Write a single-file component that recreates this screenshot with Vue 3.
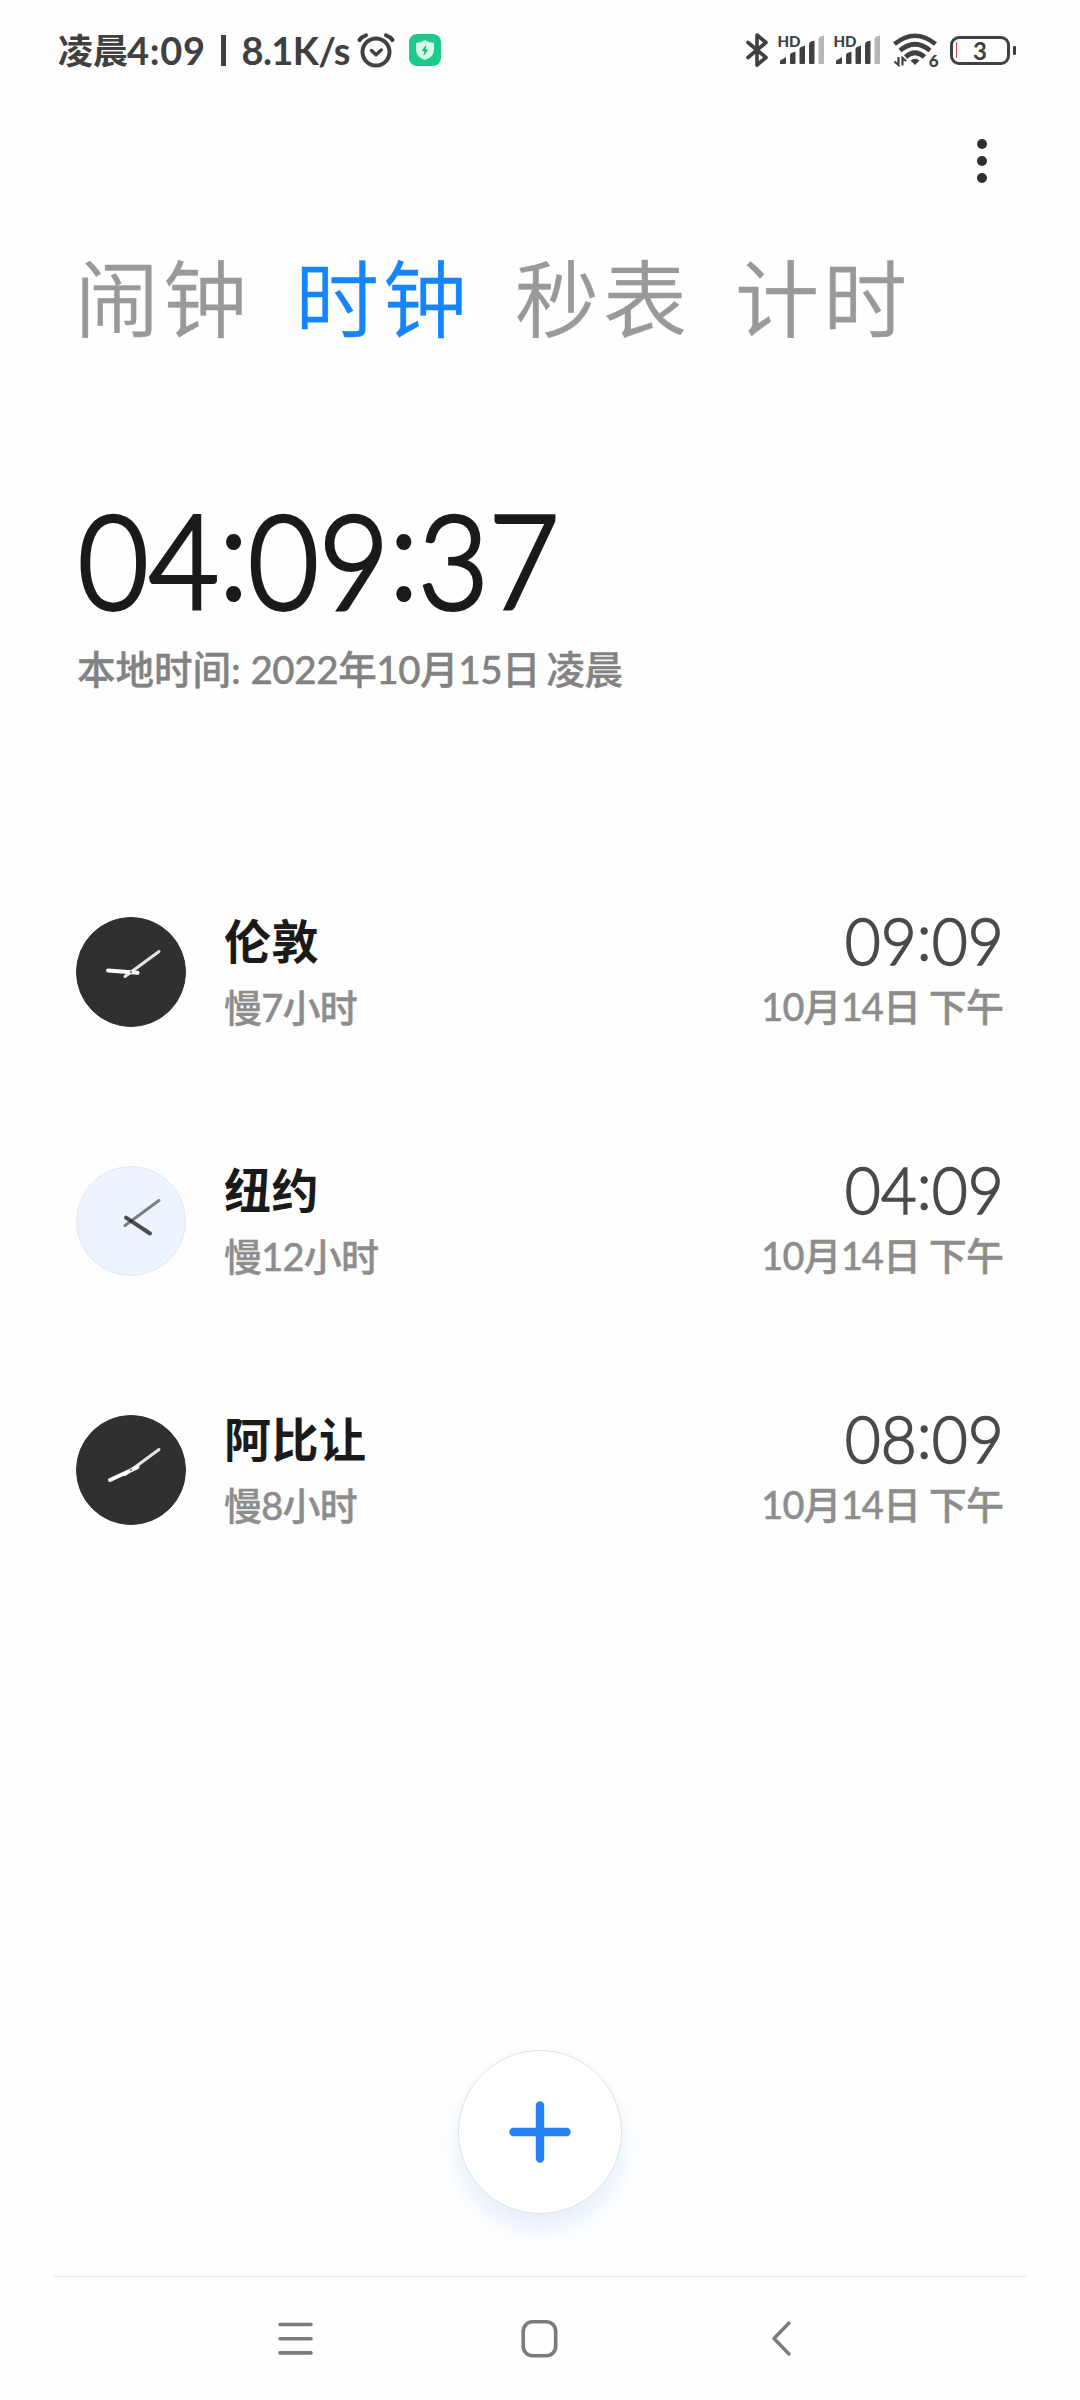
<script setup>
import { ref } from 'vue'

const tabs = ['闹钟', '时钟', '秒表', '计时']
const activeTab = ref('时钟')

const localTime = ['04', '09', '37']

// 指针坐标以表盘中心为原点
const cities = [
  { name: '伦敦', diff: '慢7小时', time: ['09', '09'], date: '10月14日', period: '下午', night: true, hour: [6.5, 0.8, -23, -1.6] },
  { name: '纽约', diff: '慢12小时', time: ['04', '09'], date: '10月14日', period: '下午', night: false, hour: [-5, -3.3, 19, 12.5] },
  { name: '阿比让', diff: '慢8小时', time: ['08', '09'], date: '10月14日', period: '下午', night: true, hour: [6.5, -2.8, -21, 10] }
]
</script>

<template>
  <div class="page">
    <!-- 状态栏 -->
    <div class="status-bar">
      <div class="status-left">
        <span class="status-cjk">凌晨</span>
        <span class="status-time">4:09</span>
        <span class="status-line"></span>
        <span class="status-speed">8.1K/s</span>
        <svg class="icon-alarm" width="40" height="36" viewBox="0 0 40 36" fill="none" stroke="#404040" stroke-width="4" stroke-linecap="round" stroke-linejoin="round">
          <circle cx="20" cy="20" r="13.5" />
          <path d="M15.5 18.5l4.5 4.2 5.2-4.7" stroke-width="3.5" />
          <path d="M3.5 8Q6 4.5 10 3.3M36.5 8Q34 4.5 30 3.3" />
        </svg>
        <svg class="icon-shield" width="32" height="32" viewBox="0 0 32 32">
          <rect width="32" height="32" rx="8" fill="#1ccb8b" />
          <path d="M16 6Q20 9 25 9V16Q25 23 16 26Q7 23 7 16V9Q12 9 16 6Z" fill="#d4fae9" />
          <path d="M17.5 10.5L12.5 17h3l-1 5 5-6.5h-3z" fill="#16b87c" />
        </svg>
      </div>
      <div class="status-right">
        <svg width="24" height="36" viewBox="0 0 24 36" fill="none" stroke="#404040" stroke-width="3.6" stroke-linecap="round" stroke-linejoin="round">
          <path d="M3 10.5L21 25.5L12 33V3L21 10.5L3 25.5" />
        </svg>
        <div v-for="n in 2" :key="n" class="signal">
          <span class="hd">HD</span>
          <svg width="46" height="30" viewBox="0 0 46 30" fill="#404040">
            <path d="M1 29V26Q1 25 4 24L7 22V28Q7 29 6 29Z" />
            <path d="M11 28V20Q11 18.5 13 17.8L16.5 16.5V28Q16.5 29 15.5 29H12Q11 29 11 28Z" />
            <path d="M20.5 28V14Q20.5 12.5 22 12L26 10.5V28Q26 29 25 29H21.5Q20.5 29 20.5 28Z" />
            <path d="M30 28V9.5Q30 7.5 32 6.5L35.5 5.5V28Q35.5 29 34.5 29H31Q30 29 30 28Z" />
            <path d="M39.5 28V4.5Q39.5 2.5 41.5 1.5L45 .5V28Q45 29 44 29H40.5Q39.5 29 39.5 28Z" fill="#b5b5b5" />
          </svg>
        </div>
        <div class="wifi">
          <svg width="44" height="34" viewBox="0 0 44 34" fill="none" stroke="#404040" stroke-width="4.6">
            <path d="M1.5 11Q22 -5.5 42.5 11" />
            <path d="M7 17.5Q22 5 37 17.5" />
            <path d="M12.5 24Q22 15.5 31.5 24" />
            <path d="M17.5 27.5Q22 24 26.5 27.5L22 32Z" fill="#404040" stroke="none" />
            <path d="M5.5 24V32L1.5 28.5M9.5 32.5V25L13 28" stroke-width="2.2" />
          </svg>
          <span class="wifi-gen">6</span>
        </div>
        <div class="battery">
          <span class="battery-level"></span>
          <span class="battery-num">3</span>
        </div>
        <span class="battery-tip"></span>
      </div>
    </div>

    <div class="toolbar">
      <button class="more" aria-label="更多">
        <i></i><i></i><i></i>
      </button>
    </div>

    <nav class="tabs">
      <a v-for="t in tabs" :key="t" :class="['tab', activeTab === t && 'active']" @click="activeTab = t">{{ t }}</a>
    </nav>

    <!-- 本地时间 -->
    <section class="local">
      <div class="local-time">
        <template v-for="(p, i) in localTime" :key="i"><span v-if="i" class="colon">:</span>{{ p }}</template>
      </div>
      <div class="local-date">本地时间: <span class="local-day">2022年10月15日 凌晨</span></div>
    </section>

    <!-- 世界时钟 -->
    <ul class="cities">
      <li v-for="c in cities" :key="c.name" class="city">
        <svg :class="['dial', c.night && 'night']" width="110" height="110" viewBox="-55 -55 110 110">
          <circle class="face" r="54.5" />
          <line class="minute" x1="-6" y1="4.5" x2="28" y2="-20.5" />
          <line class="hour" :x1="c.hour[0]" :y1="c.hour[1]" :x2="c.hour[2]" :y2="c.hour[3]" />
          <circle class="pin" r="1.2" />
        </svg>
        <div class="city-info">
          <div class="city-name">{{ c.name }}</div>
          <div class="sub">{{ c.diff }}</div>
        </div>
        <div class="city-right">
          <div class="city-time">{{ c.time[0] }}<span class="colon">:</span>{{ c.time[1] }}</div>
          <div class="sub">{{ c.date }} {{ c.period }}</div>
        </div>
      </li>
    </ul>

    <button class="fab" aria-label="添加">
      <svg width="62" height="62" viewBox="0 0 62 62" stroke="#2482f4" stroke-width="8.4" stroke-linecap="round">
        <path d="M31 4.5V57.5M4.5 31H57.5" />
      </svg>
    </button>

    <!-- 导航键 -->
    <footer class="nav-bar">
      <svg width="40" height="40" viewBox="0 0 40 40" fill="none" stroke="#7b7b7b" stroke-width="3.6" stroke-linecap="round">
        <path d="M4 5.5H35M4 19.7H35M4 33.9H35" />
      </svg>
      <svg width="40" height="40" viewBox="0 0 40 40" fill="none" stroke="#7b7b7b" stroke-width="3.6">
        <rect x="3.2" y="2.8" width="32.5" height="34" rx="9.5" />
      </svg>
      <svg width="40" height="40" viewBox="0 0 40 40" fill="none" stroke="#7b7b7b" stroke-width="3.4" stroke-linecap="round" stroke-linejoin="round">
        <path d="M25 4L10 19.5L25 35" />
      </svg>
    </footer>
  </div>
</template>

<style>
body {
  margin: 0;
  background: #fefefe;
}
</style>

<style scoped>
.page {
  width: 1080px;
  height: 2400px;
  display: flex;
  flex-direction: column;
  background: #fefefe;
  font-family: Lato, "Noto Sans CJK SC", sans-serif;
  overflow: hidden;
}

button {
  border: none;
  background: none;
  padding: 0;
}

svg {
  display: block;
  flex: none;
}

.status-bar {
  display: flex;
  justify-content: space-between;
  height: 100px;
  padding: 0 64px 0 58px;
  color: #404040;
}

.status-left,
.status-right {
  display: flex;
  align-items: center;
  height: 100px;
  white-space: nowrap;
}

.status-cjk {
  font-size: 35px;
  line-height: 50px;
  font-weight: 700;
  width: 69px;
  margin-top: -1px;
}

.status-time {
  font-size: 38px;
  font-weight: 700;
  width: 94px;
  letter-spacing: 0.7px;
}

.status-line {
  width: 4.5px;
  height: 31px;
  background: #404040;
}

.status-speed {
  font-size: 38px;
  font-weight: 700;
  width: 113px;
  margin-left: 16px;
  letter-spacing: -0.6px;
}

.icon-alarm {
  margin-left: 1px;
}

.icon-shield {
  margin-left: 13px;
}

.signal {
  position: relative;
  width: 46px;
  height: 30px;
  margin-left: 10px;
}

.hd {
  position: absolute;
  top: 0;
  left: -1px;
  font-size: 15px;
  line-height: 12px;
  font-weight: 900;
}

.wifi {
  position: relative;
  margin-left: 12px;
}

.wifi-gen {
  position: absolute;
  right: -2px;
  bottom: -1px;
  font-size: 17px;
  line-height: 14px;
  font-weight: 900;
  background: #fefefe;
}

.battery {
  display: flex;
  align-items: center;
  box-sizing: border-box;
  width: 60px;
  height: 29px;
  margin-left: 13px;
  border: 3px solid #404040;
  border-radius: 9px;
}

.battery-level {
  width: 1.5px;
  height: 16px;
  margin-left: 3px;
  background: #dc4a4a;
}

.battery-num {
  margin-left: 16px;
  margin-top: 2px;
  font-size: 24px;
  line-height: 22px;
  font-weight: 700;
}

.battery-tip {
  width: 3.5px;
  height: 9px;
  margin-left: 3px;
  border-radius: 1px;
  background: #404040;
}

.toolbar {
  display: flex;
  justify-content: flex-end;
  height: 122px;
  padding: 39px 93px 0 0;
  box-sizing: border-box;
}

.more {
  display: flex;
  flex-direction: column;
  gap: 7px;
}

.more i {
  width: 10px;
  height: 10px;
  border-radius: 50%;
  background: #303030;
}

.tabs {
  display: flex;
  gap: 44px;
  padding-left: 75px;
  height: 152px;
  line-height: 153px;
}

.tab {
  font-size: 84px;
  font-weight: 350;
  letter-spacing: 4px;
  color: #999;
  -webkit-text-stroke: 0.4px currentColor;
}

.tab.active {
  color: #1684fc;
}

.local {
  height: 538px;
  padding: 105px 0 0 78px;
  box-sizing: border-box;
}

.local-time {
  font-size: 130px;
  line-height: 160px;
  font-weight: 300;
  -webkit-text-stroke: 4px #1a1a1a;
  color: #1a1a1a;
  transform: scaleX(0.935);
  transform-origin: left;
}

.colon {
  position: relative;
  top: -0.08em;
}

.local-date {
  margin: 2px 0 0 -1px;
  font-size: 38.5px;
  line-height: 56px;
  font-weight: 500;
  color: #828282;
  -webkit-text-stroke: 0.4px currentColor;
}

.local-day {
  letter-spacing: -0.4px;
  word-spacing: -3px;
}

.cities {
  list-style: none;
  margin: 0;
  padding: 0 76px;
}

.city {
  display: flex;
  height: 120px;
  margin-bottom: 129px;
  align-items: center;
}

.face {
  fill: #edf4fd;
  stroke: #e2e8ef;
}

.minute {
  stroke: #7b7f84;
  stroke-width: 3;
  stroke-linecap: round;
}

.hour {
  stroke: #4a4e52;
  stroke-width: 4;
  stroke-linecap: round;
}

.pin {
  fill: #222;
}

.night .face {
  fill: #303030;
  stroke: #303030;
}

.night .minute {
  stroke: #e4e4e4;
}

.night .hour {
  stroke: #fff;
}

.night .pin {
  fill: #888;
}

.city-info {
  flex: 1;
  margin: 3px 0 0 38px;
}

.city-name {
  font-size: 47px;
  line-height: 66px;
  font-weight: 700;
  letter-spacing: 0.5px;
  color: #1a1a1a;
}

.sub {
  font-size: 38px;
  line-height: 66px;
  font-weight: 500;
  letter-spacing: -0.8px;
  color: #8d8d8d;
  -webkit-text-stroke: 0.4px currentColor;
}

.city-right {
  margin-top: 2px;
  text-align: right;
}

.city-right .sub {
  margin-right: 1px;
  letter-spacing: -0.9px;
}

.city-time {
  font-size: 66px;
  line-height: 66px;
  font-weight: 300;
  -webkit-text-stroke: 1.6px #4a4a4a;
  color: #4a4a4a;
  transform: scaleX(0.94);
  transform-origin: right;
}

.fab {
  display: flex;
  align-items: center;
  justify-content: center;
  box-sizing: border-box;
  width: 164px;
  height: 164px;
  margin: 391px auto 0;
  border: 1px solid #dfe2e5;
  border-radius: 50%;
  background: #fff;
  box-shadow: 0 14px 26px rgba(36, 130, 244, 0.12);
}

.nav-bar {
  display: flex;
  justify-content: space-between;
  align-items: center;
  height: 124px;
  margin: auto 54px 0;
  padding: 0 222px;
  box-sizing: border-box;
  border-top: 1px solid #e4e4e4;
}
</style>
